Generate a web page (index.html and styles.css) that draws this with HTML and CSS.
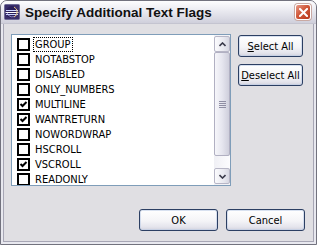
FILE: index.html
```html
<!DOCTYPE html>
<html>
<head>
<meta charset="utf-8">
<title>Specify Additional Text Flags</title>
<link rel="stylesheet" href="styles.css">
</head>
<body>
<div class="window">
  <div class="titlebar">
    <svg class="app-icon" width="16" height="16" viewBox="0 0 16 16">
      <rect x="0.5" y="0.5" width="15" height="15" rx="1" fill="#3a2f6b" stroke="#6d6a96"/>
      <circle cx="8" cy="8" r="6" fill="#2a1f5a"/>
      <path d="M3 8.5 A5.5 5.5 0 0 0 13 10.5" fill="none" stroke="#8c86c8" stroke-width="1"/>
      <rect x="2" y="6" width="12" height="1" fill="#c9d2ff"/>
      <rect x="1.5" y="8" width="13" height="1" fill="#ffffff"/>
      <rect x="2" y="10" width="12" height="1" fill="#c9d2ff"/>
      <path d="M10 3 A5.5 5.5 0 0 1 10 13" fill="none" stroke="#e8c68a" stroke-width="1"/>
    </svg>
    <span class="title">Specify Additional Text Flags</span>
    <div class="close">
      <svg width="9" height="9" viewBox="0 0 9 9"><path d="M1 1 L8 8 M8 1 L1 8" stroke="#fff" stroke-width="2" stroke-linecap="square"/></svg>
    </div>
  </div>
  <div class="frame">
    <div class="client">
      <div class="main">
        <div class="listbox">
          <ul class="items">
            <li class="item"><span class="cb"></span><span class="label focus">GROUP</span></li>
            <li class="item"><span class="cb"></span><span class="label">NOTABSTOP</span></li>
            <li class="item"><span class="cb"></span><span class="label">DISABLED</span></li>
            <li class="item"><span class="cb"></span><span class="label">ONLY_NUMBERS</span></li>
            <li class="item"><span class="cb checked"><svg width="9" height="9" viewBox="0 0 9 9"><path d="M1.5 4 L3.5 6 L7.5 2" fill="none" stroke="#000" stroke-width="2"/></svg></span><span class="label">MULTILINE</span></li>
            <li class="item"><span class="cb checked"><svg width="9" height="9" viewBox="0 0 9 9"><path d="M1.5 4 L3.5 6 L7.5 2" fill="none" stroke="#000" stroke-width="2"/></svg></span><span class="label">WANTRETURN</span></li>
            <li class="item"><span class="cb"></span><span class="label">NOWORDWRAP</span></li>
            <li class="item"><span class="cb"></span><span class="label">HSCROLL</span></li>
            <li class="item"><span class="cb checked"><svg width="9" height="9" viewBox="0 0 9 9"><path d="M1.5 4 L3.5 6 L7.5 2" fill="none" stroke="#000" stroke-width="2"/></svg></span><span class="label">VSCROLL</span></li>
            <li class="item"><span class="cb"></span><span class="label">READONLY</span></li>
          </ul>
          <div class="scrollbar">
            <div class="sb-btn">
              <svg width="7" height="5" viewBox="0 0 7 5"><path d="M0.5 4 L3.5 1 L6.5 4" fill="none" stroke="#3b3b4b" stroke-width="1.6"/></svg>
            </div>
            <div class="sb-thumb">
              <span class="grip"></span>
            </div>
            <div class="sb-track"></div>
            <div class="sb-btn">
              <svg width="7" height="5" viewBox="0 0 7 5"><path d="M0.5 1 L3.5 4 L6.5 1" fill="none" stroke="#3b3b4b" stroke-width="1.6"/></svg>
            </div>
          </div>
        </div>
        <div class="side">
          <button class="btn"><u>S</u>elect All</button>
          <button class="btn"><u>D</u>eselect All</button>
        </div>
      </div>
      <div class="footer">
        <button class="btn wide">OK</button>
        <button class="btn wide">Cancel</button>
      </div>
    </div>
  </div>
</div>
</body>
</html>
```

FILE: styles.css
```css
* {
  box-sizing: border-box;
  margin: 0;
  padding: 0;
}

body {
  margin: 0;
  background: #ffffff;
  font-family: "DejaVu Sans Condensed", "DejaVu Sans", sans-serif;
  font-size: 11px;
  color: #000;
}

.window {
  width: 317px;
  height: 245px;
  border: 1px solid #72727e;
  border-radius: 7px 7px 0 0;
  background: #d9d9e3;
  display: flex;
  flex-direction: column;
  overflow: hidden;
}

.titlebar {
  flex: none;
  height: 23px;
  display: flex;
  align-items: center;
  padding: 0 5px 0 3px;
  background: linear-gradient(#fdfdfe, #eeeef3 35%, #dedee7 70%, #cfcfdb);
  border-bottom: 1px solid #c4c4d0;
}

.app-icon {
  flex: none;
  margin-right: 5px;
}

.title {
  flex: 1;
  font-family: "Liberation Sans", Arial, sans-serif;
  font-weight: bold;
  font-size: 13.5px;
  color: #111;
  white-space: nowrap;
}

.close {
  flex: none;
  width: 16px;
  height: 16px;
  border: 1px solid #ffffff;
  border-radius: 3px;
  background: linear-gradient(135deg, #e79a87, #d0583a 45%, #b8391c);
  box-shadow: 0 0 0 1px #c9a9a3;
  display: flex;
  align-items: center;
  justify-content: center;
}

.frame {
  flex: 1;
  display: flex;
  padding: 0 2px 2px 2px;
  background: #e8e8ef;
}

.client {
  flex: 1;
  display: flex;
  flex-direction: column;
  background: #e0dfe3;
  border: 1px solid #a7a6b5;
  border-top: none;
  padding: 10px 8px 10px 7px;
}

.main {
  display: flex;
  gap: 7px;
}

.listbox {
  width: 220px;
  height: 152px;
  border: 1px solid #7f9db9;
  background: #fff;
  display: flex;
  overflow: hidden;
}

.items {
  flex: 1;
  list-style: none;
  padding: 2px 0 0 5px;
}

.item {
  height: 15px;
  display: flex;
  align-items: center;
}

.cb {
  flex: none;
  width: 13px;
  height: 13px;
  border: 2px solid #000;
  background: #fff;
  display: flex;
  align-items: center;
  justify-content: center;
  margin-right: 4px;
}

.label {
  line-height: 13px;
  padding: 0 1px;
  white-space: nowrap;
}

.label.focus {
  outline: 1px dotted #000;
  outline-offset: 0;
}

.scrollbar {
  flex: none;
  width: 16px;
  display: flex;
  flex-direction: column;
  padding: 1px 0 1px 0;
  background: #f3f3f7;
}

.sb-btn {
  flex: none;
  height: 16px;
  border: 1px solid #b7b6c6;
  border-radius: 2px;
  background: linear-gradient(90deg, #fbfbfd, #e9e9f0 60%, #d7d7e2);
  display: flex;
  align-items: center;
  justify-content: center;
}

.sb-thumb {
  flex: none;
  height: 104px;
  border: 1px solid #b1b0c2;
  border-radius: 2px;
  background: linear-gradient(90deg, #f6f6fa, #e6e6ef 50%, #cfcfdc);
  display: flex;
  align-items: center;
  justify-content: center;
}

.grip {
  width: 7px;
  height: 7px;
  background: repeating-linear-gradient(#8f8ea3 0 1px, transparent 1px 2px);
}

.sb-track {
  flex: 1;
  background: linear-gradient(90deg, #f0f0f5, #fcfcfe);
}

.side {
  display: flex;
  flex-direction: column;
  gap: 7px;
  padding-top: 1px;
}

.btn {
  font-family: "DejaVu Sans Condensed", "DejaVu Sans", sans-serif;
  font-size: 11px;
  color: #000;
  width: 65px;
  height: 22px;
  border: 1px solid #2c3f63;
  border-radius: 3px;
  background: linear-gradient(#ffffff, #f4f4f7 55%, #e4e4ec 85%, #d3d3de);
  box-shadow: inset 0 0 0 1px rgba(190, 205, 230, 0.6);
  white-space: nowrap;
}

.footer {
  margin-top: auto;
  display: flex;
  justify-content: flex-end;
  gap: 8px;
}

.btn.wide {
  width: 79px;
}
```
